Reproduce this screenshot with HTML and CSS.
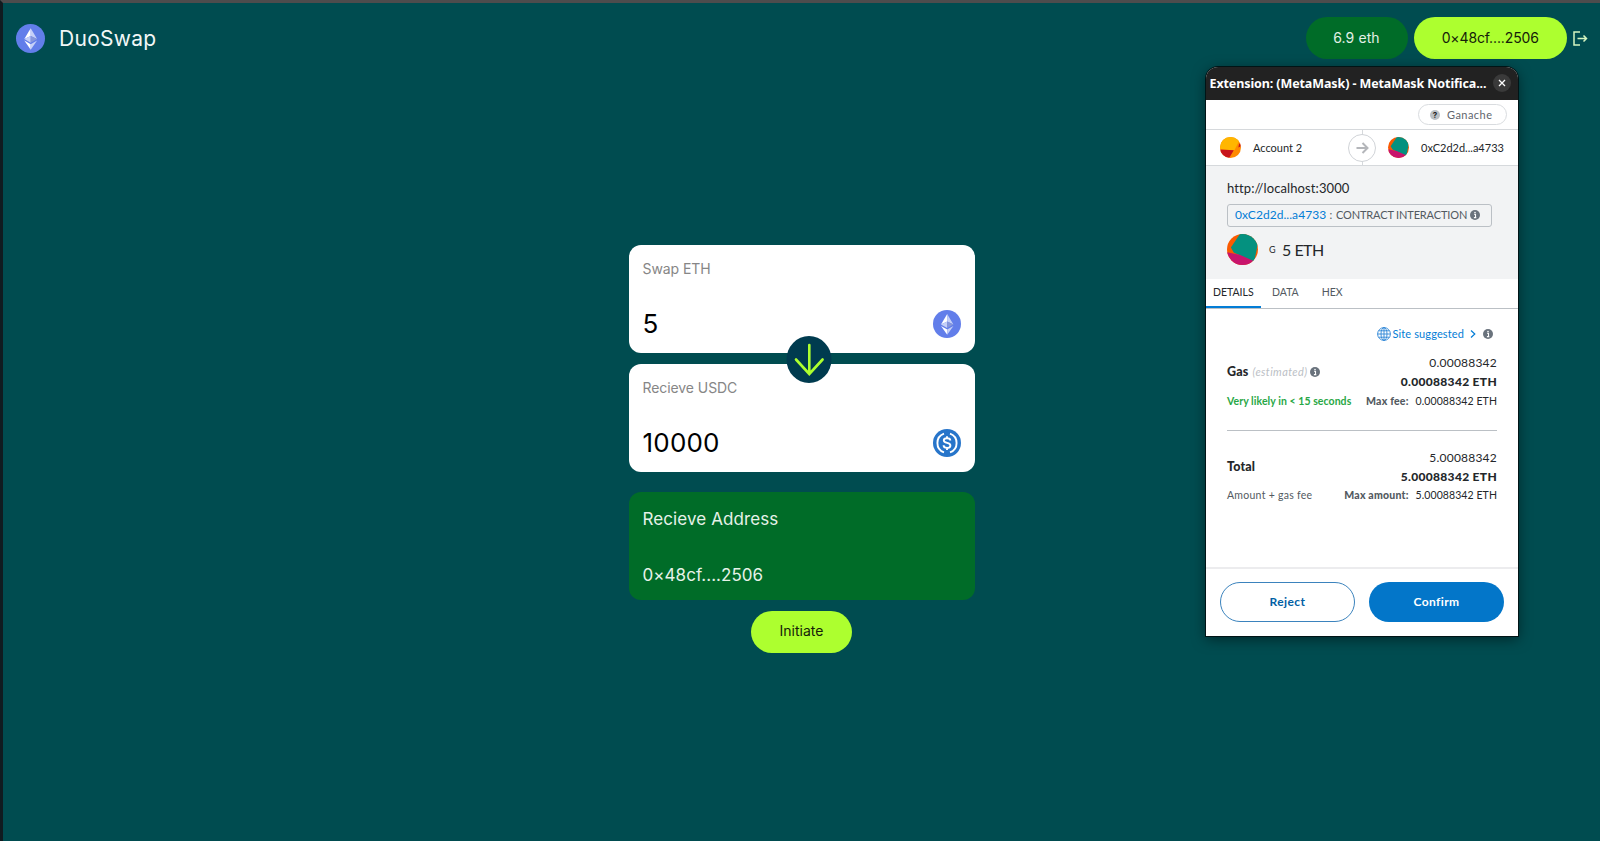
FILE: index.html
```html
<!DOCTYPE html>
<html lang="en">
<head>
<meta charset="utf-8">
<title>DuoSwap</title>
<link rel="stylesheet" href="styles.css">
</head>
<body>
<svg width="0" height="0" class="defs">
  <symbol id="eth" viewBox="0 0 28 28">
    <circle cx="14" cy="14" r="14" fill="#627eea"/>
    <path d="M14.2 4 8 14.4l6.2-2.8z" fill="#fff"/><path d="m14.2 4 6.2 10.4-6.2-2.8z" fill="#c5d0f8"/>
    <path d="m8 14.4 6.2-2.8V18z" fill="#c5d0f8"/><path d="m20.4 14.4-6.2-2.8V18z" fill="#8797db"/>
    <path d="m8 16 6.2 3.5v5.3z" fill="#fff"/><path d="m20.4 16-6.2 3.5v5.3z" fill="#c5d0f8"/>
  </symbol>
  <symbol id="info" viewBox="0 0 10 10">
    <circle cx="5" cy="5" r="5" fill="#6a737d"/><circle cx="5" cy="2.5" r=".8" fill="#fff"/>
    <path d="M4 4.2h1.5v3M3.900 7.600h2.400" fill="none" stroke="#fff" stroke-width="1.100"/>
  </symbol>
  <symbol id="jazz" viewBox="0 0 32 32">
    <clipPath id="jc"><circle cx="16" cy="16" r="16"/></clipPath>
    <g clip-path="url(#jc)"><path d="M0 0h32v32H0z" fill="#fa5a00"/><path d="M14-1 4 14l3 5 21 10 6-30z" fill="#04917f"/><path d="m-1 18.500 14 3 14 6-4 6H-1z" fill="#c8146c"/></g>
  </symbol>
</svg>
<div class="app">
  <header class="topbar">
    <div class="brand"><svg class="brand-logo"><use href="#eth"/></svg><span>DuoSwap</span></div>
    <div class="wallet">
      <div class="pill balance">6.9 eth</div>
      <div class="pill address">0×48cf....2506</div>
      <svg class="logout" viewBox="0 0 15 15"><path d="M7 1H1v13h6M4.500 7.500h9M10.500 4.500l3 3-3 3" fill="none" stroke="#d5f5c0" stroke-width="1.500"/></svg>
    </div>
  </header>
  <main class="swap">
    <section class="card">
      <div class="label">Swap ETH</div>
      <div class="amount"><span>5</span><svg class="coin"><use href="#eth"/></svg></div>
      <svg class="arrow" viewBox="0 0 45 47"><ellipse cx="22.500" cy="23.500" rx="22.500" ry="23.500" fill="#003b4f"/><path d="M22.800 9v28.500M9.500 23.500l13.300 14.500 13.300-14.500" fill="none" stroke="#adff2f" stroke-width="2.600" stroke-linecap="round"/></svg>
    </section>
    <section class="card">
      <div class="label">Recieve USDC</div>
      <div class="amount"><span>10000</span>
        <svg class="coin" viewBox="0 0 28 28"><circle cx="14" cy="14" r="14" fill="#2775ca"/><g fill="none" stroke="#fff" stroke-width="1.900"><path d="M11 4.600a10 10 0 0 0 0 18.800M17 4.600a10 10 0 0 1 0 18.800"/><path d="M17.300 11.600c0-1.600-1.400-2.400-3.300-2.400s-3.200.8-3.200 2.300c0 3.300 6.600 1.600 6.600 4.900 0 1.700-1.500 2.500-3.400 2.500-2 0-3.400-.9-3.400-2.600M14 7.200v2M14 18.800v2.200"/></g></svg>
      </div>
    </section>
    <section class="card dest">
      <div class="dest-label">Recieve Address</div>
      <div class="dest-value">0×48cf....2506</div>
    </section>
    <button class="pill initiate">Initiate</button>
  </main>
</div>

<aside class="popup">
  <div class="titlebar"><span>Extension: (MetaMask) - MetaMask Notifica...</span>
    <svg class="close" viewBox="0 0 18 18"><circle cx="9" cy="9" r="9" fill="#3a3a3a"/><path d="m6 6 6 6M12 6l-6 6" stroke="#fff" stroke-width="1.300"/></svg>
  </div>
  <div class="network"><div class="chip"><i class="qm">?</i><span>Ganache</span></div></div>
  <div class="accounts">
    <div class="sender"><svg class="avatar" viewBox="0 0 32 32"><g clip-path="url(#jc)"><path d="M0 0h32v32H0z" fill="#ff8a00"/><path d="M0 0h32L22 20 0 19z" fill="#ffb600"/><path d="m0 19 21 1-7 12H0zM32 8l-3 3-1 5 4-2z" fill="#c8141c"/></g></svg><span>Account 2</span></div>
    <div class="divider"><svg viewBox="0 0 28 28"><circle cx="14" cy="14" r="13.500" fill="#fff" stroke="#d0d3d7"/><path d="M8.500 14h11M14.500 9l5 5-5 5" fill="none" stroke="#b4b6ba" stroke-width="2"/></svg></div>
    <div class="recipient"><svg class="avatar"><use href="#jazz"/></svg><span>0xC2d2d...a4733</span></div>
  </div>
  <div class="summary">
    <div class="origin">http://localhost:3000</div>
    <div class="method"><span class="link">0xC2d2d...a4733</span><span class="colon">:</span><span class="kind">CONTRACT INTERACTION</span><svg class="info"><use href="#info"/></svg></div>
    <div class="value"><svg class="identicon"><use href="#jazz"/></svg><span class="g">G</span><span class="sum">5 ETH</span></div>
  </div>
  <nav class="tabs"><span class="tab active">DETAILS</span><span class="tab">DATA</span><span class="tab">HEX</span></nav>
  <div class="details">
    <div class="suggested"><svg class="globe" viewBox="0 0 14 14"><g fill="none" stroke="#2d86d6" stroke-width=".9"><circle cx="7" cy="7" r="6.400"/><ellipse cx="7" cy="7" rx="3" ry="6.400"/><path d="M7 .6v12.800M.6 7h12.800M1.700 3.800h10.600M1.700 10.200h10.600"/></g></svg><span>Site suggested</span><svg class="chev" viewBox="0 0 6 8"><path d="m1 .5 3.800 3.500L1 7.500" fill="none" stroke="#037dd6" stroke-width="1.200"/></svg><svg class="info"><use href="#info"/></svg></div>
    <div class="fee gas">
      <div class="name"><b>Gas</b><em>(estimated)</em><svg class="info"><use href="#info"/></svg></div>
      <div class="figures"><span class="fiat">0.00088342</span><b class="crypto">0.00088342 ETH</b></div>
    </div>
    <div class="note"><b class="likely">Very likely in &lt; 15 seconds</b><span><b class="maxlabel">Max fee:</b><span class="max">0.00088342 ETH</span></span></div>
    <div class="fee total">
      <div class="name"><b>Total</b></div>
      <div class="figures"><span class="fiat">5.00088342</span><b class="crypto">5.00088342 ETH</b></div>
    </div>
    <div class="note"><span class="sumfee">Amount + gas fee</span><span><b class="maxlabel">Max amount:</b><span class="max">5.00088342 ETH</span></span></div>
  </div>
  <footer class="actions"><button class="reject">Reject</button><button class="confirm">Confirm</button></footer>
</aside>
</body>
</html>
```

FILE: styles.css
```css
* { box-sizing: border-box; }
body { margin: 0; font-family: Inter, sans-serif; background: #004c50; }
svg { display: block; flex: none; }
.defs { position: absolute; }
button { border: 0; padding: 0; font-family: inherit; }
.app { height: 841px; border-top: 3px solid #4d4c4d; border-left: 3px solid #101b20; overflow: hidden; }

.topbar { display: flex; justify-content: space-between; align-items: center; padding: 14px 12.500px 0 13px; height: 56px; }
.brand { display: flex; align-items: center; gap: 14px; color: #f2f7f7; font-size: 21px; letter-spacing: .28px; }
.brand-logo { width: 29px; height: 29px; }
.wallet { display: flex; align-items: center; }
.pill { height: 42px; border-radius: 21px; display: flex; align-items: center; justify-content: center; font-size: 14px; padding-bottom: 1px; }
.balance { width: 102px; margin-right: 6.500px; background: #006c28; color: #e3f0e6; letter-spacing: .1px; }
.address { width: 152.500px; background: #adff2f; color: #15210a; letter-spacing: -.12px; }
.logout { width: 15px; height: 15px; margin-left: 6px; }

.swap { width: 346px; margin: 186px 0 0 625.500px; display: flex; flex-direction: column; align-items: stretch; }
.card { position: relative; height: 108px; border-radius: 12px; background: #fff; padding: 14px; margin-bottom: 10.500px; }
.label { font-size: 14px; line-height: 19px; color: #868686; letter-spacing: -.08px; }
.amount { display: flex; justify-content: space-between; align-items: center; height: 32px; margin-top: 30px; font-size: 26px; color: #000; }
.amount span { line-height: 32px; letter-spacing: .2px; }
.card:first-child { margin-bottom: 10.500px; }
.coin { width: 28px; height: 28px; }
.arrow { position: absolute; left: 157px; top: 91px; width: 46px; height: 47px; z-index: 2; }
.dest { background: #006c28; color: #e6f2e8; margin-top: 10px; font-size: 17px; letter-spacing: .1px; }
.dest-label { line-height: 26px; }
.dest-value { line-height: 24px; margin-top: 31px; letter-spacing: .04px; }
.initiate { align-self: center; width: 101px; background: #adff2f; color: #15210a; padding-bottom: 2px; }

.popup { position: absolute; left: 1206px; top: 67px; width: 312px; height: 569px; background: #fff; border-radius: 12px 12px 0 0; box-shadow: 0 0 0 1px #001416, 0 3px 14px rgba(0,0,0,.5); font-family: Lato, sans-serif; color: #24272a; display: flex; flex-direction: column; }
.popup span, .popup b, .popup em { white-space: nowrap; }
.titlebar { height: 33px; border-radius: 12px 12px 0 0; background: #222; color: #fff; font: bold 12.500px/33px "Noto Sans", sans-serif; letter-spacing: -.1px; display: flex; align-items: center; justify-content: space-between; padding: 0 7px 0 3.500px; }
.close { width: 18px; height: 18px; margin-bottom: 2px; }
.network { height: 29px; display: flex; justify-content: flex-end; padding: 4px 11px 0 0; }
.chip { width: 89px; height: 21px; border: 1px solid #d9dcdf; border-radius: 11px; display: flex; align-items: center; padding-left: 11px; gap: 7px; font-size: 11px; color: #5f666d; letter-spacing: .45px; }
.qm { width: 10px; height: 10px; border-radius: 5px; background: #bbc0c5; color: #222; font: bold 8px/10px Inter, sans-serif; letter-spacing: 0; text-align: center; }
.accounts { height: 37px; border-top: 1px solid #d6d9dc; border-bottom: 1px solid #d6d9dc; display: flex; align-items: center; font-size: 11px; }
.sender { flex: 1; display: flex; align-items: center; padding-left: 14px; gap: 12px; }
.recipient { display: flex; align-items: center; width: 142px; padding-left: 12px; gap: 12px; }
.avatar { width: 21px; height: 21px; }
.divider { width: 28px; height: 35px; display: flex; align-items: center; background: linear-gradient(#d6d9dc, #d6d9dc) center / 1px 100% no-repeat; }
.divider svg { width: 28px; height: 28px; }
.summary { height: 113px; background: #f2f3f4; padding: 12px 21px 0; }
.origin { font-size: 13px; line-height: 21px; letter-spacing: .1px; }
.method { width: 265px; height: 23px; margin-top: 5px; border: 1px solid #bbc0c5; border-radius: 3px; display: flex; align-items: center; padding: 0 0 2px 7px; font-size: 11px; color: #535a61; }
.link { color: #037dd6; font-size: 12px; width: 91px; letter-spacing: .05px; }
.colon { width: 10px; text-align: center; }
.kind { width: 130px; letter-spacing: -.14px; }
.info { width: 10px; height: 10px; }
.method .info { margin-left: 4px; }
.value { display: flex; align-items: center; margin-top: 7px; }
.identicon { width: 31px; height: 31px; }
.g { font-size: 9px; margin-left: 11px; width: 13px; }
.sum { font-size: 16px; letter-spacing: -.5px; padding-bottom: 1px; }
.tabs { height: 30px; border-bottom: 1px solid #bbc0c5; display: flex; font-size: 10.500px; line-height: 27px; color: #535a61; }
.tab { margin-right: 11px; padding: 0 6px; height: 29px; }
.active { width: 55px; color: #24272a; border-bottom: 2px solid #037dd6; margin-right: 5px; padding-left: 7px; }
.details { padding: 16px 21px 0; flex: 1; }
.suggested { height: 17px; display: flex; align-items: center; justify-content: flex-end; padding-right: 4px; color: #037dd6; font-size: 11px; letter-spacing: .12px; }
.suggested span { padding-bottom: 1px; }
.globe { width: 14px; height: 14px; margin-right: 2px; }
.chev { width: 6px; height: 8px; margin: 0 7px 0 6px; }
.fee { display: flex; justify-content: space-between; align-items: center; height: 38px; margin-top: 11px; }
.name { display: flex; align-items: center; font-size: 12.500px; letter-spacing: .15px; padding-bottom: 1px; }
.name b, .figures b, .maxlabel { font-weight: 900; }
.name em { color: #bbc0c5; font-size: 11px; letter-spacing: .4px; margin: 0 3px 0 4px; }
.figures { display: flex; flex-direction: column; align-items: flex-end; font-size: 12px; line-height: 19px; }
.fiat { letter-spacing: .22px; }
.crypto { letter-spacing: .32px; }
.note { height: 19px; display: flex; justify-content: space-between; align-items: center; font-size: 10.500px; color: #535a61; }
.likely { color: #28a745; letter-spacing: .06px; }
.sumfee { letter-spacing: .27px; }
.maxlabel { letter-spacing: .2px; }
.max { margin-left: 7px; color: #24272a; letter-spacing: .08px; }
.total { margin-top: 38px; position: relative; }
.total::before { content: ""; position: absolute; left: 0; right: 0; top: -18px; border-top: 1px solid #bbc0c5; }
.total + .note { height: 17px; }
.actions { height: 69px; border-top: 2px solid #ececee; display: flex; justify-content: space-between; padding: 13px 14px 14px; }
.actions button { width: 135px; height: 40px; border-radius: 20px; font-size: 12px; font-weight: bold; letter-spacing: .4px; padding-bottom: 2px; }
.reject { background: #fff; border: 1px solid #3b83bd; color: #0260a4; }
.confirm { background: #0376c9; color: #fff; }
```
